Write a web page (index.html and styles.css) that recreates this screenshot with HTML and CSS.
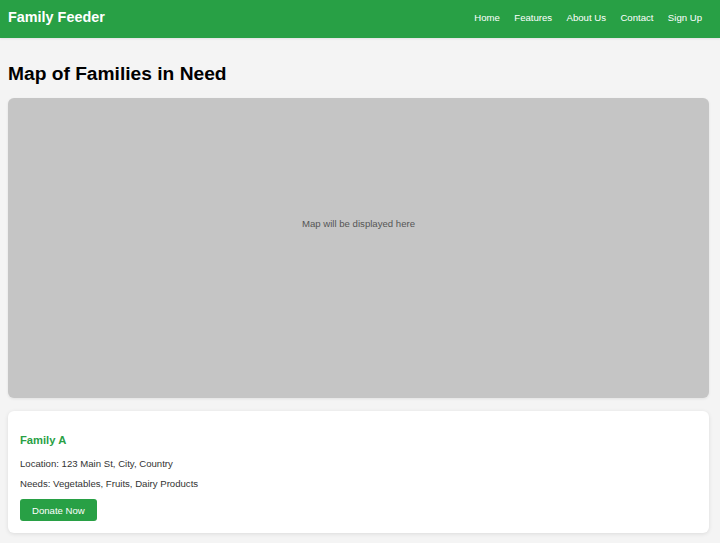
FILE: index.html
```html
<!DOCTYPE html>
<html lang="en">
<head>
<meta charset="utf-8">
<title>Family Feeder</title>
<link rel="stylesheet" href="styles.css">
</head>
<body>
<header class="site-header">
  <div class="brand">Family Feeder</div>
  <nav class="nav">
    <a href="#">Home</a>
    <a href="#">Features</a>
    <a href="#">About Us</a>
    <a href="#">Contact</a>
    <a href="#">Sign Up</a>
  </nav>
</header>
<main class="main">
  <h1 class="title">Map of Families in Need</h1>
  <div class="map">Map will be displayed here</div>
  <section class="card">
    <h3 class="card-title">Family A</h3>
    <p class="card-text">Location: 123 Main St, City, Country</p>
    <p class="card-text">Needs: Vegetables, Fruits, Dairy Products</p>
    <button class="btn">Donate Now</button>
  </section>
</main>
</body>
</html>
```
FILE: styles.css
```css
* { box-sizing: border-box; }
html, body { margin: 0; padding: 0; }
body {
  font-family: "Liberation Sans", Arial, sans-serif;
  font-size: 9.6px;
  background: #f4f4f4;
  color: #333;
}
.site-header {
  background: #28a045;
  height: 38px;
  display: flex;
  align-items: center;
  justify-content: space-between;
  padding: 0 18px 4px 8px;
  box-shadow: 0 1px 2px rgba(0,0,0,0.08);
}
.brand {
  color: #fff;
  font-weight: bold;
  font-size: 14.4px;
}
.nav {
  display: flex;
  gap: 14.4px;
}
.nav a {
  color: #fff;
  text-decoration: none;
  font-size: 9.6px;
}
.main {
  padding: 12px 11px 12px 8px;
}
.title {
  font-size: 19.2px;
  margin: 13px 0 13px;
  color: #000;
  line-height: 22px;
}
.map {
  height: 300px;
  background: #c5c5c5;
  border-radius: 6px;
  padding-top: 120px;
  text-align: center;
  color: #555;
  font-size: 9.6px;
  line-height: 11px;
  box-shadow: 0 1px 3px rgba(0,0,0,0.08);
}
.card {
  margin-top: 13px;
  background: #fff;
  border-radius: 6px;
  padding: 12px;
  box-shadow: 0 1px 4px rgba(0,0,0,0.1);
}
.card-title {
  color: #28a045;
  font-size: 11.2px;
  margin: 11px 0;
  line-height: 13px;
}
.card-text {
  margin: 9px 0;
  line-height: 11px;
  color: #333;
}
.btn {
  display: block;
  margin-top: 10px;
  background: #28a045;
  color: #fff;
  border: none;
  border-radius: 3px;
  font-family: "Liberation Sans", Arial, sans-serif;
  font-size: 9.6px;
  height: 22px;
  padding: 0 12px;
  cursor: pointer;
}
```
